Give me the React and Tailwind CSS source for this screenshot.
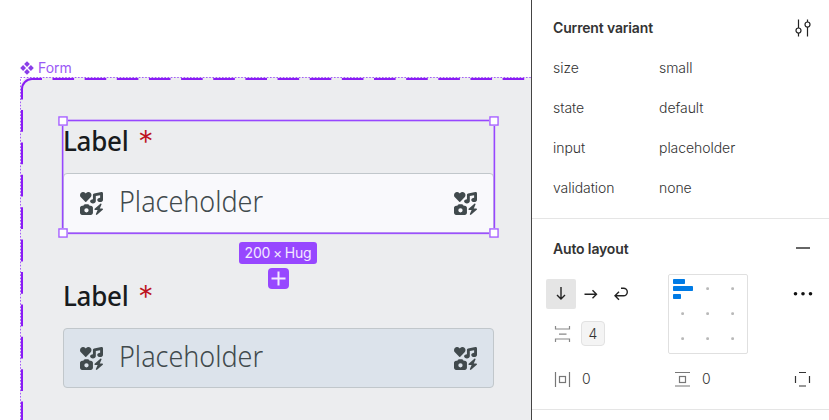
import React from "react";
import { FaIcons } from "react-icons/fa6";

function Field({ fill }) {
  return (
    <div className="flex w-[431px] flex-col">
      <div className="flex h-[52px] items-start leading-[40px]">
        <span className="w-[75px] origin-left scale-x-[0.945] whitespace-nowrap text-[27.5px] font-medium tracking-[-0.3px] text-[#181b1d]">Label</span>
        <span className="translate-y-px font-['Inter',sans-serif] text-[31px] font-light text-[#bd1220]">*</span>
      </div>
      <div className={`flex h-[60px] items-center rounded-[4px] border border-[#c1c7cb] px-4 ${fill}`}>
        <FaIcons className="size-[23px] shrink-0 text-[#414a4d]" />
        <span className="ml-4 flex-1 origin-left -translate-y-[2px] scale-x-[0.945] whitespace-nowrap text-[28.5px] font-light leading-[40px] text-[#414a4d]">Placeholder</span>
        <FaIcons className="size-[23px] shrink-0 text-[#414a4d]" />
      </div>
    </div>
  );
}

function Handle({ x, y }) {
  return (
    <g>
      <rect x={x - 5} y={y - 5} width="10" height="10" fill="#d9c2fb" />
      <rect x={x - 4} y={y - 4} width="8" height="8" fill="#fff" stroke="#a259ff" strokeWidth="1.2" />
    </g>
  );
}

function Overlay() {
  return (
    <svg className="pointer-events-none absolute left-0 top-0" width="531" height="420" fill="none">
      <path d="M20.5 420V77.5H531" stroke="#a45cf8" strokeDasharray="1.6 1.6" />
      <path d="M42 79H32A10 10 0 0 0 22 89V99.5" stroke="#8a1cf5" strokeWidth="2" />
      <path d="M52.5 79H531" stroke="#8a1cf5" strokeWidth="2" strokeDasharray="21.6 10.55" />
      <path d="M22 110V420" stroke="#8a1cf5" strokeWidth="2" strokeDasharray="21.8 10.6" />
      <rect x="62.6" y="120.5" width="431.8" height="112.8" stroke="#c5a0f8" strokeWidth="2" />
      <rect x="62.6" y="120.5" width="431.8" height="112.8" stroke="#9747ff" strokeWidth="1.2" />
      <Handle x={63} y={121} />
      <Handle x={494} y={121} />
      <Handle x={63} y={233} />
      <Handle x={494} y={233} />
    </svg>
  );
}

function Canvas() {
  return (
    <main className="relative flex h-[420px] w-[531px] shrink-0 flex-col overflow-hidden bg-white pl-5">
      <div className="mt-[58px] flex h-[19px] items-center gap-1 text-[14px] text-[#9b59f6]">
        <svg width="14" height="14" viewBox="0 0 14 14" fill="#8a3ee8">
          <path d="M7 0.2 9.9 3.1 7 6 4.1 3.1ZM7 8 9.9 10.9 7 13.8 4.1 10.9ZM3.1 4.1 6 7 3.1 9.9.2 7ZM10.9 4.1 13.8 7 10.9 9.9 8 7Z" />
        </svg>
        <span>Form</span>
      </div>
      <section className="flex flex-1 flex-col gap-[43px] rounded-tl-[11px] bg-[#ecedef] pl-[43px] pt-[44px] font-['Noto_Sans',sans-serif]">
        <Field fill="bg-[#f9f9fc]" />
        <Field fill="bg-[#dce3eb]" />
      </section>
      <Overlay />
      <div className="absolute left-[239px] top-[242px] flex w-[78px] flex-col items-center gap-1">
        <div className="flex h-[22px] w-[78px] items-center justify-center whitespace-nowrap rounded-[3px] bg-[#9747ff] pb-px text-[14px] tracking-[-0.2px] text-[#f3e9ff] [word-spacing:-1px]">200 × Hug</div>
        <svg width="21" height="21" fill="none">
          <rect width="21" height="21" rx="4" fill="#9747ff" />
          <path d="M10.5 3.5V17.5M3.5 10.5H17.5" stroke="#f3e9ff" strokeWidth="2" />
        </svg>
      </div>
    </main>
  );
}

const variants = [
  ["size", "small"],
  ["state", "default"],
  ["input", "placeholder"],
  ["validation", "none"],
];

const dots = [
  [39, 14], [64, 14], [14, 39], [39, 39], [64, 39], [14, 64], [39, 64], [64, 64],
];

function Inspector() {
  return (
    <aside className="flex h-[420px] w-[298px] shrink-0 flex-col border-l border-[#444] bg-white text-[14px] font-light leading-5 text-[#333]">
      <section className="flex h-[218px] flex-col pl-[21px] pr-[17px] pt-2">
        <div className="flex h-10 items-center justify-between">
          <h2 className="font-semibold tracking-[-0.15px] text-[#333]">Current variant</h2>
          <svg width="18" height="20" fill="none" stroke="#222" strokeWidth="1.2">
            <path d="M4.5 1.5V10M4.5 15V18.5M13.5 1.5V4M13.5 9V18.5" />
            <circle cx="4.5" cy="12.5" r="2.5" />
            <circle cx="13.5" cy="6.5" r="2.5" />
          </svg>
        </div>
        {variants.map(([name, value]) => (
          <div key={name} className="flex h-10 items-center tracking-[-0.05px]">
            <span className="w-[106px]">{name}</span>
            <span>{value}</span>
          </div>
        ))}
      </section>
      <section className="flex h-[192px] flex-col border-y border-[#e5e5e5]">
        <div className="flex h-[55px] items-center justify-between pl-[21px] pr-[19px] pt-[5px]">
          <h2 className="font-semibold tracking-[-0.15px] text-[#333]">Auto layout</h2>
          <div className="mb-[2px] h-[2px] w-[14px] bg-[#666]" />
        </div>
        <div className="flex h-[81px]">
          <div className="flex w-[136px] flex-col pl-[14px]">
            <div className="mt-[5px] flex">
              <div className="flex size-[30px] items-center justify-center rounded-[2px] bg-[#e5e5e5]">
                <svg width="30" height="30" fill="none" stroke="#222" strokeWidth="1.4"><path d="M15 8V20M11 16L15 20L19 16" /></svg>
              </div>
              <svg width="30" height="30" fill="none" stroke="#222" strokeWidth="1.4"><path d="M8.5 15.3H20.5M16.5 11.3L20.5 15.3L16.5 19.3" /></svg>
              <svg width="30" height="30" fill="none" stroke="#222" strokeWidth="1.4"><path d="M15 9.2H17.5A3.8 3.8 0 0 1 17.5 16.8H9M13 12.8L9 16.8L13 20.8" /></svg>
            </div>
            <div className="mt-[12px] flex items-center pl-2">
              <svg width="17" height="18" fill="none" stroke="#888" strokeWidth="1.2">
                <path d="M1.5 1V4H15.5V1M1.5 17V14H15.5V17M5 9.2H12.5" />
              </svg>
              <div className="ml-[10px] flex h-[25px] w-6 items-center justify-center rounded-[4px] border border-[#e2e2e2] bg-[#f4f4f4]">4</div>
            </div>
          </div>
          <svg width="81" height="81" fill="none">
            <rect x=".5" y=".5" width="79" height="79" rx="1.5" stroke="#e0e0e0" />
            {dots.map(([x, y]) => (
              <rect key={`${x}-${y}`} x={x - 0.8} y={y - 0.8} width="2.8" height="2.8" rx="1" fill="#b9b9b9" />
            ))}
            <g fill="#007be5">
              <rect x="5" y="5" width="12" height="5" rx=".8" />
              <rect x="5" y="12" width="20" height="5" rx=".8" />
              <rect x="5" y="20" width="8" height="5" rx=".8" />
            </g>
          </svg>
          <svg className="ml-[43px] mt-[15px]" width="24" height="10" fill="#111">
            <circle cx="3.5" cy="4.8" r="1.8" /><circle cx="11" cy="4.8" r="1.8" /><circle cx="18.5" cy="4.8" r="1.8" />
          </svg>
        </div>
        <div className="flex h-[48px] items-center pl-[22px]">
          <svg width="18" height="18" fill="none" stroke="#777" strokeWidth="1.2">
            <path d="M1.5 2V17M15.5 2V17" /><rect x="5.5" y="6.5" width="6" height="6" />
          </svg>
          <span className="ml-[10px] w-[92px]">0</span>
          <svg width="17" height="18" fill="none" stroke="#777" strokeWidth="1.2">
            <path d="M1 2.5H16M1 16H16" /><rect x="5.5" y="6.5" width="6" height="6" />
          </svg>
          <span className="ml-[11px] w-[92px]">0</span>
          <svg width="18" height="18" fill="none" stroke="#333" strokeWidth="1.2">
            <path d="M5 2.5H12M5 16H12M1.5 6V13M15.5 6V13" />
          </svg>
        </div>
      </section>
    </aside>
  );
}

export default function App() {
  return (
    <div className="flex h-[420px] w-[829px] overflow-hidden bg-white font-['Inter',sans-serif]">
      <Canvas />
      <Inspector />
    </div>
  );
}
